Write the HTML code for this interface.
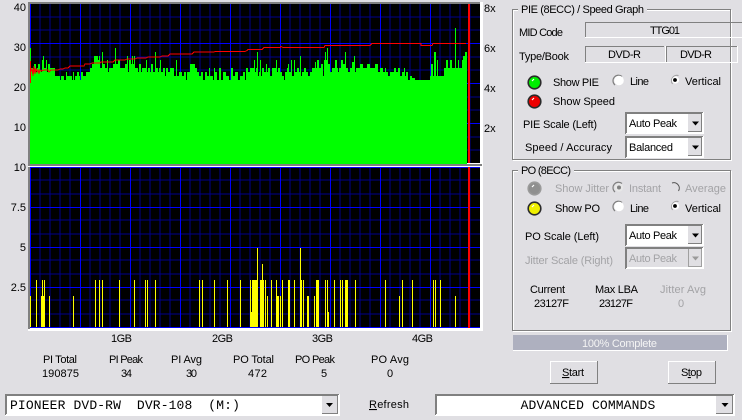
<!DOCTYPE html>
<html><head><meta charset="utf-8"><style>
html,body{margin:0;padding:0;background:#e0dfe3;width:742px;height:420px;overflow:hidden}
svg{display:block}
text{font-family:"Liberation Sans",sans-serif;font-size:11px;fill:#000}
.d{fill:#a3a3a6}
.c{font-family:"Liberation Mono",monospace;font-size:13px;letter-spacing:.13px}
</style></head><body>
<svg width="742" height="420" viewBox="0 0 742 420" xmlns="http://www.w3.org/2000/svg">
<rect width="742" height="420" fill="#e0dfe3"/>
<!-- chart frame -->
<rect x="28" y="2" width="455" height="329" fill="#fff"/>
<rect x="28" y="2" width="452" height="2" fill="#808080"/>
<rect x="28" y="2" width="2" height="327" fill="#808080"/>
<rect x="30" y="4" width="450" height="159" fill="#000"/>
<rect x="30" y="167" width="450" height="161" fill="#000"/>
<rect x="28" y="164" width="454" height="2" fill="#808080"/>
<rect x="28" y="166" width="454" height="1" fill="#fff"/>
<g shape-rendering="crispEdges" fill="none">
<path stroke="#00008c" d="M40 4V163M50 4V163M60 4V163M70 4V163M90 4V163M100 4V163M110 4V163M120 4V163M140 4V163M150 4V163M160 4V163M170 4V163M190 4V163M200 4V163M210 4V163M220 4V163M240 4V163M250 4V163M260 4V163M270 4V163M290 4V163M300 4V163M310 4V163M320 4V163M340 4V163M350 4V163M360 4V163M370 4V163M390 4V163M400 4V163M410 4V163M420 4V163M440 4V163M450 4V163M460 4V163M470 4V163M30 17H480M30 30H480M30 57H480M30 70H480M30 97H480M30 110H480M30 137H480M30 150H480
M40 167V328M50 167V328M60 167V328M70 167V328M90 167V328M100 167V328M110 167V328M120 167V328M140 167V328M150 167V328M160 167V328M170 167V328M190 167V328M200 167V328M210 167V328M220 167V328M240 167V328M250 167V328M260 167V328M270 167V328M290 167V328M300 167V328M310 167V328M320 167V328M340 167V328M350 167V328M360 167V328M370 167V328M390 167V328M400 167V328M410 167V328M420 167V328M440 167V328M450 167V328M460 167V328M470 167V328M30 180H480M30 194H480M30 220H480M30 234H480M30 260H480M30 274H480M30 300H480M30 314H480"/>
<path stroke="#0000ff" d="M30.5 4V163M80.5 4V163M130.5 4V163M180.5 4V163M230.500 4V163M280.500 4V163M330.500 4V163M380.500 4V163M430.500 4V163M30 43.500H480M30 83.500H480M30 123.500H480
M30.500 167V328M80.500 167V328M130.500 167V328M180.500 167V328M230.500 167V328M280.500 167V328M330.500 167V328M380.500 167V328M430.500 167V328M30 167.500H480M30 207.500H480M30 247.500H480M30 287.500H480"/>
<!-- green -->
<path fill="#00ff00" d="M30 164V48H31V68H33V72H34V64H36V72H37V68H38V64H40V70H41V72H42V60H43V56H44V68H46V60H47V72H48V64H50V68H52V68H55V76H60V80H61V76H64V80H66V72H67V76H72V80H73V72H74V80H75V76H77V72H79V76H80V80H81V72H83V76H86V72H88V72H90V68H92V64H94V56H98V60H99V56H100V68H102V52H103V64H105V68H107V60H108V72H109V68H113V64H115V48H116V64H118V60H120V68H125V64H127V56H128V72H129V60H131V64H132V56H133V64H134V56H135V68H138V72H139V64H141V72H142V68H146V60H147V72H148V68H150V72H151V64H153V72H155V52H156V68H158V72H159V68H160V60H161V72H163V68H165V76H166V68H168V72H170V68H174V76H176V60H177V76H179V72H182V76H184V72H186V80H187V72H190V64H195V68H197V72H199V76H201V72H203V80H205V72H207V76H209V68H210V76H213V80H214V68H215V72H217V80H219V68H221V80H223V72H226V76H229V80H231V68H233V76H235V72H238V80H240V76H243V72H245V80H246V68H248V72H250V68H254V60H255V72H256V68H257V52H258V76H259V72H260V60H261V76H262V68H264V72H266V64H267V72H268V68H270V76H272V68H276V60H277V72H278V68H280V72H282V76H284V80H285V72H287V68H288V64H289V72H291V60H292V76H294V60H295V72H297V68H299V72H300V56H301V76H302V72H304V68H306V72H308V76H310V72H312V68H315V62H316V68H317V60H319V68H321V64H323V76H324V60H325V52H326V60H327V48H328V64H330V72H332V68H335V60H337V68H338V72H339V68H341V60H343V64H345V52H346V68H348V72H350V68H352V62H354V56H355V72H356V68H360V64H363V68H367V64H370V68H375V64H378V72H380V68H383V72H385V68H386V72H388V76H390V72H394V68H396V72H398V68H400V76H402V72H404V68H405V76H406V72H408V80H410V76H412V78H415V80H430V76H431V64H433V76H434V52H436V76H437V60H438V76H440V76H444V68H446V60H448V68H450V60H452V68H455V28H456V68H458V60H459V68H460V68H462V60H463V56H465V52H467V164Z"/>
<!-- yellow -->
<path fill="#ffff00" d="M30 296h1v32h-1zM36 280h1v48h-1zM41 296h4v32h-4zM42 280h1v16h-1zM44 280h1v16h-1zM49 296h1v32h-1zM73 296h1v32h-1zM95 280h1v48h-1zM99 280h1v48h-1zM102 280h1v48h-1zM119 280h1v48h-1zM134 280h1v48h-1zM145 280h1v48h-1zM147 280h1v48h-1zM155 280h1v48h-1zM199 280h1v48h-1zM202 280h1v48h-1zM214 280h1v48h-1zM227 280h1v48h-1zM240 280h1v48h-1zM250 280h1v48h-1zM251 312h1v16h-1zM252 280h5v48h-5zM257 248h1v80h-1zM260 280h4v48h-4zM262 264h1v16h-1zM265 280h1v48h-1zM267 296h1v32h-1zM271 280h1v48h-1zM276 280h1v48h-1zM277 296h2v32h-2zM280 296h1v32h-1zM282 280h1v48h-1zM288 280h2v48h-2zM294 280h1v48h-1zM300 248h1v80h-1zM301 280h1v48h-1zM303 280h1v48h-1zM307 296h2v32h-2zM314 296h1v32h-1zM316 280h3v48h-3zM325 280h1v48h-1zM327 280h1v48h-1zM328 312h1v16h-1zM334 280h1v48h-1zM340 280h1v48h-1zM342 280h1v48h-1zM345 280h3v48h-3zM355 280h1v48h-1zM385 280h1v48h-1zM399 296h1v32h-1zM402 280h1v48h-1zM412 280h1v48h-1zM433 280h1v48h-1zM435 280h1v48h-1zM440 280h1v48h-1zM455 296h1v32h-1z"/>
<path stroke="#0000ff" d="M30 327.500H480"/>
<!-- red marker -->
<rect x="468" y="4" width="2" height="159" fill="#ff0000"/>
<rect x="468" y="167" width="2" height="161" fill="#ff0000"/>
<!-- speed -->
<path fill="none" stroke="#ff0000" d="M30.500 83V61M31 72L32 68L33 76L34 66L35 74L36 68L37 72L38 70L39 73L40 70L41 71L44 70H48L49 72L51 70H56L58 70L60 69L63 69L65 68H68L70 66H75L77 66H84L85 64H90L92 63H100L101 62H113L115 60H125L127 59H135L137 58H146L148 57H160L162 56H168L170 54H192L194 52H214L215 51.500H245L247 50.500L248 49.500H262L264 47.500H280L281 46.500L283 47.500H324L325 45.500H370L372 43.500H421L421 45.500H432L433 43.500H466"/>
</g>
<!-- axis labels -->
<g text-anchor="end"><text x="26" y="11">40</text><text x="26" y="51">30</text><text x="26" y="91">20</text><text x="26" y="131">10</text><text x="26" y="171">10</text><text x="26" y="211">7.5</text><text x="26" y="251">5</text><text x="26" y="291">2.5</text></g>
<text x="484" y="12">8x</text><text x="484" y="52">6x</text><text x="484" y="92">4x</text><text x="484" y="132">2x</text>
<text x="111" y="342" textLength="21">1GB</text><text x="212" y="342" textLength="21">2GB</text><text x="312" y="342" textLength="21">3GB</text><text x="412" y="342" textLength="21">4GB</text>
<text x="43" y="363" textLength="34">PI Total</text><text x="109" y="363" textLength="34">PI Peak</text><text x="171" y="363" textLength="31">PI Avg</text><text x="233" y="363" textLength="41">PO Total</text><text x="295" y="363" textLength="40">PO Peak</text><text x="371" y="363" textLength="38">PO Avg</text>
<text x="42" y="377" textLength="37">190875</text><text x="121" y="377" textLength="11">34</text><text x="186" y="377" textLength="11">30</text><text x="248" y="377" textLength="19">472</text><text x="321" y="377">5</text><text x="387" y="377">0</text>

<!-- groups -->
<g shape-rendering="crispEdges" fill="none">
<rect x="513.500" y="10.500" width="218" height="150" stroke="#fff"/><rect x="512.500" y="9.500" width="218" height="150" stroke="#808080"/>
<rect x="513.500" y="171.500" width="218" height="160" stroke="#fff"/><rect x="512.500" y="170.500" width="218" height="160" stroke="#808080"/>
</g>
<rect x="518" y="5" width="129" height="9" fill="#e0dfe3"/><text x="521" y="13" textLength="123">PIE (8ECC) / Speed Graph</text>
<rect x="518" y="165" width="56" height="9" fill="#e0dfe3"/><text x="521" y="174" textLength="50">PO (8ECC)</text>
<text x="519" y="36" textLength="44">MID Code</text><text x="519" y="60" textLength="50">Type/Book</text>
<!-- sunken fields -->
<g shape-rendering="crispEdges" fill="none">
<path stroke="#808080" d="M585.500 37V22.500H742M585.500 62V46.500H664M666.500 62V46.500H737"/>
<path stroke="#fff" d="M585 37.500H742M585 62.500H665M665.500 46V63M666 62.500H738M737.500 46V63"/>
</g>
<text x="650" y="34" textLength="30">TTG01</text><text x="608" y="58" textLength="33">DVD-R</text><text x="680" y="58" textLength="32">DVD-R</text>
<!-- LEDs -->
<g stroke="#2a2a2a" stroke-width="1.6"><circle cx="534.500" cy="82.500" r="6.300" fill="#00ee00"/><circle cx="534.500" cy="101.500" r="6.300" fill="#ee0000"/><circle cx="534.500" cy="188.500" r="6.300" fill="#8f8f8f" stroke="#9a9a9a"/><circle cx="534.500" cy="208.500" r="6.300" fill="#f0f000"/></g>
<g stroke="#fff" stroke-width="1.200"><path d="M532 81l2-2M532 100l2-2M532 187l2-2M532 207l2-2"/></g>
<text x="553" y="86" textLength="46">Show PIE</text><text x="553" y="105" textLength="62">Show Speed</text>
<text x="555" y="192" class="d" textLength="54">Show Jitter</text><text x="555" y="212" textLength="45">Show PO</text>
<!-- radios -->
<path d="M615 85a5.500 5.500 0 0 1 7-8.500" fill="none" stroke="#808080" stroke-width="1.200"/><circle cx="619" cy="80.500" r="4.800" fill="#fff"/>
<path d="M672.500 84a5.500 5.500 0 0 1 6-8.500" fill="none" stroke="#808080" stroke-width="1" opacity=".7"/><circle cx="675.500" cy="80" r="3.600" fill="#fff"/><circle cx="675" cy="80" r="1.900" fill="#000"/>
<path d="M615 192a5.500 5.500 0 0 1 7-8.500" fill="none" stroke="#808080" stroke-width="1.200"/><circle cx="619" cy="187.500" r="4.200" fill="#e8e8e8"/><circle cx="619" cy="187.500" r="2" fill="#808080"/>
<path d="M672 183a5.500 5.500 0 0 1 6.500 8" fill="none" stroke="#555" stroke-width="1"/>
<path d="M615 211a5.500 5.500 0 0 1 7-8.500" fill="none" stroke="#808080" stroke-width="1.200"/><circle cx="619" cy="206.500" r="4.800" fill="#fff"/>
<path d="M672.500 210a5.500 5.500 0 0 1 6-8.500" fill="none" stroke="#808080" stroke-width="1" opacity=".7"/><circle cx="675.500" cy="206" r="3.600" fill="#fff"/><circle cx="675" cy="206" r="1.900" fill="#000"/>
<text x="630" y="85" textLength="19">Line</text><text x="685" y="85" textLength="36">Vertical</text>
<text x="629" y="192" class="d" textLength="32">Instant</text><text x="685" y="192" class="d" textLength="41">Average</text>
<text x="630" y="212" textLength="19">Line</text><text x="685" y="212" textLength="36">Vertical</text>
<text x="523" y="128" textLength="74">PIE Scale (Left)</text><text x="525" y="151" textLength="87">Speed / Accuracy</text>
<text x="525" y="240" textLength="74">PO Scale (Left)</text><text x="525" y="264" class="d" textLength="88">Jitter Scale (Right)</text>
<!-- combos -->
<g shape-rendering="crispEdges">
<rect x="625" y="112" width="79" height="22" fill="#fff"/><path d="M625.500 134V112.500H703M626.500 133V113.500H702" fill="none" stroke="#808080"/>
<rect x="688" y="114" width="14" height="17" fill="#e0dfe3"/><path d="M701.500 114V131.500H688" fill="none" stroke="#808080"/>
<rect x="625" y="136" width="79" height="22" fill="#fff"/><path d="M625.500 158V136.500H703M626.500 157V137.500H702" fill="none" stroke="#808080"/>
<rect x="688" y="138" width="14" height="17" fill="#e0dfe3"/><path d="M701.500 138V155.500H688" fill="none" stroke="#808080"/>
<rect x="625" y="224" width="79" height="22" fill="#fff"/><path d="M625.500 246V224.500H703M626.500 245V225.500H702" fill="none" stroke="#808080"/>
<rect x="688" y="226" width="14" height="17" fill="#e0dfe3"/><path d="M701.500 226V243.500H688" fill="none" stroke="#808080"/>
<rect x="625" y="247" width="79" height="22" fill="#fff"/><rect x="627" y="249" width="75" height="18" fill="#e0dfe3"/><path d="M625.500 269V247.500H703M626.500 268V248.500H702" fill="none" stroke="#808080"/>
<path d="M701.500 249V266.500H688M688.500 249V266" fill="none" stroke="#a0a0a0"/>
<path d="M692 121.500h7l-3.500 4zM692 145.500h7l-3.500 4zM692 233.500h7l-3.500 4z" fill="#000" shape-rendering="auto"/>
<path d="M692 256.500h7l-3.500 4z" fill="#9a9a9a" shape-rendering="auto"/>
</g>
<text x="629" y="127" textLength="48">Auto Peak</text><text x="629" y="151" textLength="44">Balanced</text><text x="629" y="239" textLength="48">Auto Peak</text><text x="629" y="262" class="d" textLength="48">Auto Peak</text>
<text x="530" y="293" textLength="35">Current</text><text x="595" y="293" textLength="43">Max LBA</text><text x="660" y="293" class="d" textLength="46">Jitter Avg</text><text x="534" y="307" textLength="35">23127F</text><text x="599" y="307" textLength="34">23127F</text><text x="678" y="307" class="d">0</text>
<!-- progress -->
<rect x="513" y="335" width="215" height="16" fill="#fff"/><rect x="513" y="335" width="214" height="15" fill="#aeb0bf"/>
<text x="582" y="347" style="fill:#f4f4f4" textLength="75">100% Complete</text>
<!-- buttons -->
<g shape-rendering="crispEdges">
<rect x="550" y="361" width="48" height="23" fill="#808080"/><rect x="550" y="361" width="47" height="22" fill="#fff"/><rect x="551" y="362" width="46" height="21" fill="#e0dfe3"/>
<rect x="668" y="361" width="48" height="23" fill="#808080"/><rect x="668" y="361" width="47" height="22" fill="#fff"/><rect x="669" y="362" width="46" height="21" fill="#e0dfe3"/>
</g>
<text x="562" y="376" textLength="22"><tspan text-decoration="underline">S</tspan>tart</text><text x="681" y="376" textLength="21">S<tspan text-decoration="underline">t</tspan>op</text>
<!-- bottom combos -->
<g shape-rendering="crispEdges">
<rect x="5" y="394" width="335" height="22" fill="#fff"/><path d="M5.500 415V394.500H339M6.500 414V395.500H338" fill="none" stroke="#808080"/>
<rect x="322" y="396" width="16" height="18" fill="#e0dfe3"/><path d="M337.500 396V413.500H322" fill="none" stroke="#808080"/>
<rect x="435" y="394" width="300" height="22" fill="#fff"/><path d="M435.500 415V394.500H734M436.500 414V395.500H733" fill="none" stroke="#808080"/>
<rect x="716" y="396" width="17" height="18" fill="#e0dfe3"/><path d="M732.500 396V413.500H716" fill="none" stroke="#808080"/>
<path d="M326 403h7l-3.500 4zM721.500 403h7l-3.500 4z" fill="#000" shape-rendering="auto"/>
</g>
<text x="10" y="409" class="c" xml:space="preserve">PIONEER DVD-RW  DVR-108  (M:)</text>
<text x="588" y="409" class="c" text-anchor="middle">ADVANCED COMMANDS</text>
<text x="369" y="408" textLength="40"><tspan text-decoration="underline">R</tspan>efresh</text>
</svg>
</body></html>
